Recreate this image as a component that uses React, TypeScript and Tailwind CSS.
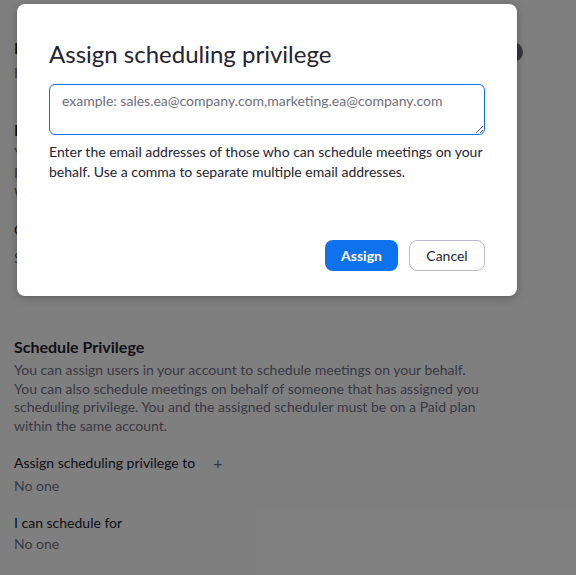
import { useState } from 'react';

function Section({ title, children }: { title: string; children: React.ReactNode }) {
  return (
    <div>
      <h3 className="text-[16px] leading-[20px] font-bold text-[#232333]">{title}</h3>
      {children}
    </div>
  );
}

export default function App() {
  const [emails, setEmails] = useState('');

  return (
    <div className="relative w-[576px] h-[575px] overflow-hidden bg-white font-['Lato','Liberation_Sans',sans-serif]">
      {/* page behind the dialog */}
      <div className="ml-[14px] w-[509px] pt-[38px]">
        <div className="flex items-start justify-between">
          <Section title="Integrate with Outlook">
            <p className="mt-[5px] text-[14px] leading-[20px] text-[#747487]">
              Personal meeting ID is used when scheduling.
            </p>
          </Section>
          <div className="mt-[4px] h-[20px] w-[40px] rounded-full bg-[#6e6e7e]" />
        </div>

        <div className="mt-[37px]">
          <Section title="Delegated calendar">
            <p className="mt-[3px] text-[14px] leading-[20px] text-[#747487]">
              You can let others manage your calendar
              <br />
              Both of you must use the same provider
              <br />
              With access to your settings
            </p>
          </Section>
          <p className="mt-[17px] text-[14px] leading-[20px] text-[#232333]">Calendar access</p>
          <p className="mt-[8px] text-[14px] leading-[20px] text-[#0e72ed]">Set up delegation</p>
        </div>

        <div className="mt-[69px]">
          <h3 className="text-[16px] leading-[20px] font-bold text-[#232333]">Schedule Privilege</h3>
          <p className="mt-[4px] text-[14px] leading-[18.5px] text-[#747487]">
            You can assign users in your account to schedule meetings on your behalf.
            <br />
            You can also schedule meetings on behalf of someone that has assigned you
            <br />
            scheduling privilege. You and the assigned scheduler must be on a Paid plan
            <br />
            within the same account.
          </p>

          <div className="mt-[18px] flex items-center text-[14px] leading-[20px] text-[#232333]">
            <span>Assign scheduling privilege to</span>
            <span className="ml-[18px] text-[16px] text-[#747487]">+</span>
          </div>
          <p className="mt-[3px] text-[14px] leading-[20px] text-[#747487]">No one</p>

          <p className="mt-[17px] text-[14px] leading-[20px] text-[#232333]">I can schedule for</p>
          <p className="mt-[1px] text-[14px] leading-[20px] text-[#747487]">No one</p>
        </div>
      </div>

      {/* overlay */}
      <div className="absolute inset-0 bg-black/50" />

      {/* dialog */}
      <div className="absolute left-[17px] top-[4px] w-[500px] h-[292px] rounded-[8px] bg-white shadow-[0_2px_8px_rgba(0,0,0,0.25)] px-[32px] pt-[35px]">
        <h2 className="text-[24px] leading-[30px] text-[#232333]">Assign scheduling privilege</h2>
        <textarea
          value={emails}
          onChange={(e) => setEmails(e.target.value)}
          placeholder="example: sales.ea@company.com,marketing.ea@company.com"
          className="mt-[15px] block w-[436px] h-[51px] rounded-[6px] border border-[#0e72ed] px-[12px] py-[6px] text-[14px] leading-[20px] text-[#232333] placeholder:text-[#6e6e7e] outline-none"
        />
        <p className="mt-[7px] text-[14px] leading-[20px] text-[#232333]">
          Enter the email addresses of those who can schedule meetings on your
          <br />
          behalf. Use a comma to separate multiple email addresses.
        </p>
        <div className="mt-[58px] flex justify-end gap-[11px]">
          <button className="h-[31px] w-[73px] rounded-[8px] bg-[#0e72ed] text-[14px] font-bold text-white">
            Assign
          </button>
          <button className="h-[31px] w-[76px] rounded-[8px] border border-[#babacc] bg-white text-[14px] text-[#232333]">
            Cancel
          </button>
        </div>
      </div>
    </div>
  );
}
